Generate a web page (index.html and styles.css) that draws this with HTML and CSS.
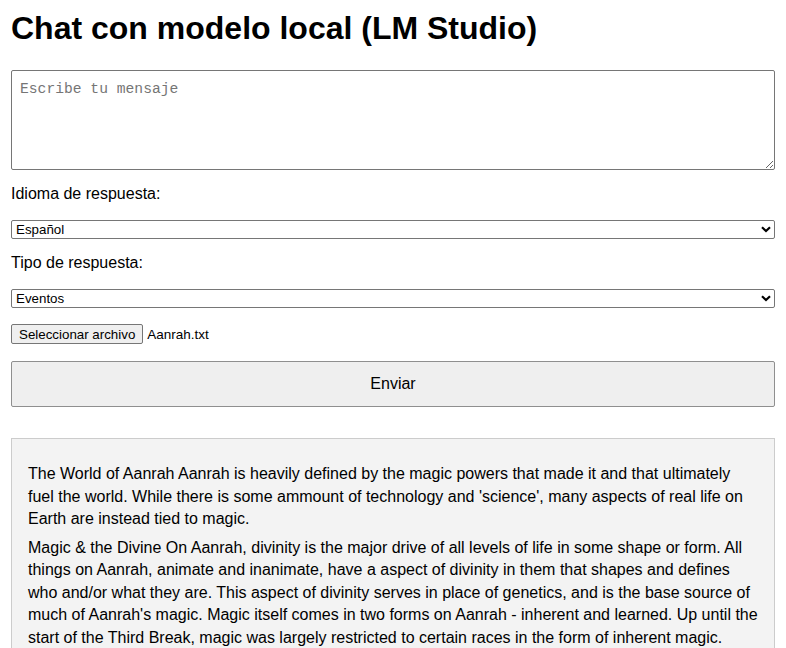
FILE: index.html
```html
<!DOCTYPE html>
<html lang="es">
<head>
<meta charset="utf-8">
<title>Chat con modelo local (LM Studio)</title>
<link rel="stylesheet" href="styles.css">
</head>
<body>
<h1 class="title">Chat con modelo local (LM Studio)</h1>
<form class="chat-form">
  <textarea class="message" placeholder="Escribe tu mensaje"></textarea>
  <label class="field-label" for="lang">Idioma de respuesta:</label>
  <div class="select-wrap">
    <select id="lang" class="select">
      <option>Español</option>
    </select>
    <svg class="chevron" width="10" height="7" viewBox="0 0 10 7"><path d="M1 1.2 L5 5 L9 1.2" fill="none" stroke="#000" stroke-width="2.2"/></svg>
  </div>
  <label class="field-label" for="type">Tipo de respuesta:</label>
  <div class="select-wrap">
    <select id="type" class="select">
      <option>Eventos</option>
    </select>
    <svg class="chevron" width="10" height="7" viewBox="0 0 10 7"><path d="M1 1.2 L5 5 L9 1.2" fill="none" stroke="#000" stroke-width="2.2"/></svg>
  </div>
  <div class="file-row">
    <button type="button" class="file-btn">Seleccionar archivo</button>
    <span class="file-name">Aanrah.txt</span>
  </div>
  <button type="button" class="send">Enviar</button>
</form>
<div class="output">
  <p>The World of Aanrah Aanrah is heavily defined by the magic powers that made it and that ultimately fuel the world. While there is some ammount of technology and 'science', many aspects of real life on Earth are instead tied to magic.</p>
  <p>Magic &amp; the Divine On Aanrah, divinity is the major drive of all levels of life in some shape or form. All things on Aanrah, animate and inanimate, have a aspect of divinity in them that shapes and defines who and/or what they are. This aspect of divinity serves in place of genetics, and is the base source of much of Aanrah's magic. Magic itself comes in two forms on Aanrah - inherent and learned. Up until the start of the Third Break, magic was largely restricted to certain races in the form of inherent magic. Learned magic began to appear as the world changed and scholars began to study the flows of divinity.</p>
</div>
</body>
</html>
```
FILE: styles.css
```css
html, body {
  background: #fff;
}
body {
  margin: 0;
  padding: 0 11px;
  font-family: "Liberation Sans", Arial, sans-serif;
  font-size: 16px;
  color: #000;
}
.title {
  font-size: 32px;
  font-weight: bold;
  margin: 10px 0 23px;
  line-height: 37px;
}
.chat-form {
  display: flex;
  flex-direction: column;
}
.message {
  box-sizing: border-box;
  width: 100%;
  height: 100px;
  padding: 9px 8px;
  border: 1px solid #767676;
  border-radius: 2px;
  font-family: "Liberation Mono", "DejaVu Sans Mono", monospace;
  font-size: 14.67px;
  line-height: 18px;
  margin: 0;
}
.message::placeholder {
  color: #757575;
}
.field-label {
  display: block;
  margin: 15px 0 17px;
  line-height: 18px;
}
.select-wrap {
  position: relative;
}
.select {
  box-sizing: border-box;
  width: 100%;
  height: 19px;
  padding: 0 4px;
  margin: 0;
  border: 1px solid #767676;
  border-radius: 2px;
  background: #fff;
  font-family: "Liberation Sans", Arial, sans-serif;
  font-size: 13.33px;
  color: #000;
  appearance: none;
  -webkit-appearance: none;
}
.chevron {
  position: absolute;
  right: 4px;
  top: 6px;
  pointer-events: none;
}
.file-row {
  display: flex;
  align-items: center;
  gap: 4px;
  margin-top: 16px;
  height: 20px;
}
.file-btn {
  box-sizing: border-box;
  height: 20px;
  padding: 0 7px;
  margin: 0;
  border: 1px solid #767676;
  border-radius: 2px;
  background: #efefef;
  font-family: "Liberation Sans", Arial, sans-serif;
  font-size: 13.33px;
  color: #000;
}
.file-name {
  font-size: 13.5px;
}
.send {
  box-sizing: border-box;
  width: 100%;
  height: 46px;
  margin-top: 17px;
  border: 1px solid #8f8f8f;
  border-radius: 2px;
  background: #efefef;
  font-family: "Liberation Sans", Arial, sans-serif;
  font-size: 16px;
  color: #000;
}
.output {
  margin-top: 31px;
  padding: 18px 16px 16px;
  background: #f3f3f3;
  border: 1px solid #ccc;
}
.output p {
  margin: 6px 0;
  line-height: 22.5px;
}
```
